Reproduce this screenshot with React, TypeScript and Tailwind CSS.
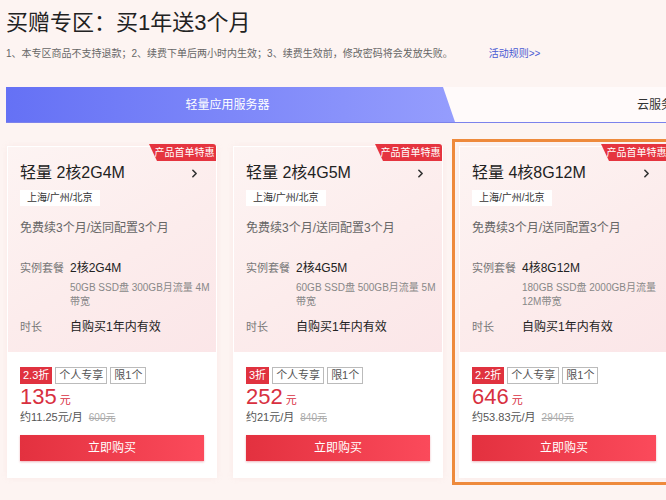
import { ChevronRight } from "lucide-react";

const PLANS = [
  {
    name: "2核2G4M",
    spec: "50GB SSD盘 300GB月流量 4M带宽",
    discount: "2.3折",
    price: "135",
    monthly: "约11.25元/月",
    original: "600元",
    active: false,
  },
  {
    name: "2核4G5M",
    spec: "60GB SSD盘 500GB月流量 5M带宽",
    discount: "3折",
    price: "252",
    monthly: "约21元/月",
    original: "840元",
    active: false,
  },
  {
    name: "4核8G12M",
    spec: "180GB SSD盘 2000GB月流量 12M带宽",
    discount: "2.2折",
    price: "646",
    monthly: "约53.83元/月",
    original: "2940元",
    active: true,
  },
];

function PlanCard({ plan }: { plan: (typeof PLANS)[number] }) {
  return (
    <div
      className={
        "shrink-0 w-[223px] border-[3px] p-[4px] " +
        (plan.active ? "border-[#ee8a3c]" : "border-transparent")
      }
    >
      <div className="relative w-[210px] h-[332px] border border-white bg-white shadow-[0_0_6px_rgba(230,180,180,0.15)]">
        <div className="absolute right-0 top-[-3px] h-[17px] w-[67px] bg-[#e5343f] text-white text-[10px] leading-[17px] text-center [clip-path:polygon(0_0,100%_0,100%_100%,8px_100%)] rounded-tr-[3px] pl-[4px]">
          产品首单特惠
        </div>
        <div className="h-[205px] px-[12px] pt-[15px] bg-[linear-gradient(150deg,#fdf4f3_0%,#fcecec_55%,#fbe6e8_100%)]">
          <div className="flex items-center justify-between h-[22px]">
            <span className="text-[16px] text-[#222]">轻量 {plan.name}</span>
            <ChevronRight size={13} strokeWidth={3} className="text-[#333] mr-[3px]" />
          </div>
          <div className="mt-[4px] inline-block h-[16px] bg-white px-[7px] text-[10px] leading-[16px] text-[#333]">
            上海/广州/北京
          </div>
          <div className="mt-[11px] text-[12px] leading-[18px] text-[#666]">免费续3个月/送同配置3个月</div>
          <div className="mt-[22px] flex">
            <span className="w-[50px] shrink-0 text-[11px] leading-[18px] text-[#777]">实例套餐</span>
            <div>
              <div className="text-[12px] leading-[18px] text-[#222]">{plan.name}</div>
              <div className="mt-[4px] w-[140px] text-[10px] leading-[14px] text-[#888]">{plan.spec}</div>
            </div>
          </div>
          <div className="mt-[9px] flex">
            <span className="w-[50px] shrink-0 text-[11px] leading-[18px] text-[#777]">时长</span>
            <span className="text-[12px] leading-[18px] text-[#222]">自购买1年内有效</span>
          </div>
        </div>
        <div className="px-[12px] pt-[15px]">
          <div className="flex gap-[3px] h-[17px]">
            <span className="bg-[#e0323f] px-[3px] text-[11px] leading-[17px] text-white">{plan.discount}</span>
            <span className="border border-[#bbb] px-[3px] text-[11px] leading-[15px] text-[#555]">个人专享</span>
            <span className="border border-[#bbb] px-[3px] text-[11px] leading-[15px] text-[#555]">限1个</span>
          </div>
          <div className="flex items-baseline h-[26px] leading-[26px] text-[#d8303f]">
            <span className="text-[22px]">{plan.price}</span>
            <span className="ml-[3px] text-[11px]">元</span>
          </div>
          <div className="text-[11px] leading-[14px] text-[#555]">
            {plan.monthly}
            <span className="ml-[6px] text-[10px] text-[#aaa] line-through">{plan.original}</span>
          </div>
          <button className="mt-[10px] h-[26px] w-full bg-[linear-gradient(90deg,#e3313f,#fb4a5b)] text-[12px] text-white shadow-[0_1px_2px_rgba(200,40,60,0.35)]">
            立即购买
          </button>
        </div>
      </div>
    </div>
  );
}

export default function App() {
  return (
    <div className="w-[666px] h-[500px] overflow-hidden bg-[#fdf4f2] font-['Liberation_Sans','Noto_Sans_CJK_SC',sans-serif]">
      <div className="pl-[6px] pt-[9px]">
        <h1 className="text-[22px] leading-[28px] text-[#222]">买赠专区：买1年送3个月</h1>
        <p className="mt-[9px] text-[10px] leading-[16px] text-[#666] whitespace-nowrap">
          1、本专区商品不支持退款；2、续费下单后两小时内生效；3、续费生效前，修改密码将会发放失败。
          <a className="ml-[36px] text-[#4a5ad2]">活动规则&gt;&gt;</a>
        </p>
      </div>

      <div className="ml-[6px] mt-[25px] flex h-[36px] border-b border-[#7c82ec] bg-[#fffafa]">
        <div className="w-[449px] shrink-0 flex items-center justify-center pr-[6px] bg-[linear-gradient(90deg,#6571f5,#959dfd)] [clip-path:polygon(0_0,437px_0,449px_100%,0_100%)] text-[12px] text-white">
          轻量应用服务器
        </div>
        <div className="flex items-center pl-[182px] text-[12px] text-[#333] whitespace-nowrap overflow-hidden">
          云服务器
        </div>
      </div>

      <div className="mt-[16px] flex gap-[3px]">
        {PLANS.map((p) => (
          <PlanCard key={p.name} plan={p} />
        ))}
      </div>
    </div>
  );
}
